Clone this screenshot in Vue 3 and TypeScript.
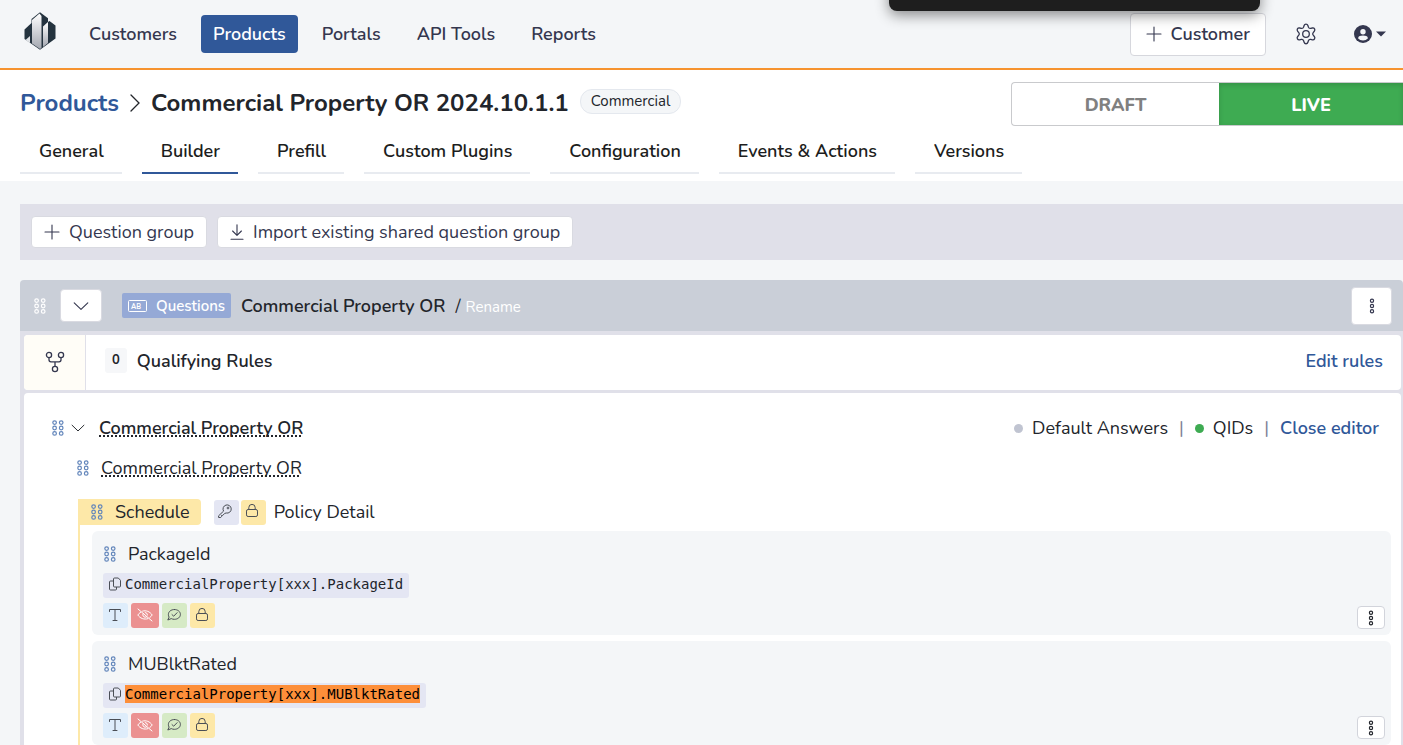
<script setup lang="ts">
import { ref } from 'vue'

interface Question {
  name: string
  path: string
  matched: boolean
}

const navItems: string[] = ['Customers', 'Products', 'Portals', 'API Tools', 'Reports']
const activeNav = ref('Products')

const tabs: string[] = ['General', 'Builder', 'Prefill', 'Custom Plugins', 'Configuration', 'Events & Actions', 'Versions']
const activeTab = ref('Builder')

const status = ref<'draft' | 'live'>('live')

const questions: Question[] = [
  { name: 'PackageId', path: 'CommercialProperty[xxx].PackageId', matched: false },
  { name: 'MUBlktRated', path: 'CommercialProperty[xxx].MUBlktRated', matched: true },
]
</script>

<template>
  <div class="page">
    <svg class="sprite" aria-hidden="true">
      <symbol id="i-drag" viewBox="0 0 12 16">
        <g fill="none" stroke="currentColor" stroke-width="1.2">
          <circle cx="2.6" cy="2.6" r="1.8" /><circle cx="9.2" cy="2.6" r="1.8" />
          <circle cx="2.6" cy="8" r="1.8" /><circle cx="9.2" cy="8" r="1.8" />
          <circle cx="2.6" cy="13.4" r="1.8" /><circle cx="9.2" cy="13.4" r="1.8" />
        </g>
      </symbol>
      <symbol id="i-more" viewBox="0 0 6 16">
        <g fill="none" stroke="currentColor" stroke-width="1.2">
          <circle cx="3" cy="2.8" r="1.6" /><circle cx="3" cy="8" r="1.6" /><circle cx="3" cy="13.2" r="1.6" />
        </g>
      </symbol>
      <symbol id="i-plus" viewBox="0 0 16 16">
        <path d="M8 1v14M1 8h14" fill="none" stroke="currentColor" stroke-width="1.1" stroke-linecap="round" />
      </symbol>
      <symbol id="i-chevron" viewBox="0 0 16 16">
        <path d="M1.2 4.8L8 11.4l6.8-6.6" fill="none" stroke="currentColor" stroke-width="1.1" stroke-linecap="round" stroke-linejoin="round" />
      </symbol>
      <symbol id="i-lock" viewBox="0 0 16 16">
        <g fill="none" stroke="currentColor" stroke-width="1" stroke-linejoin="round">
          <rect x="2.500" y="6.500" width="11" height="7" rx="1.600" />
          <path d="M4.800 6.500V4.600a3.200 3.200 0 0 1 6.400 0v1.900" />
        </g>
      </symbol>
    </svg>

    <div class="toast" role="status"></div>

    <header class="topbar">
      <a href="#" class="logo" aria-label="Home">
        <svg viewBox="0 0 32 38" width="32" height="38">
          <defs>
            <linearGradient id="tower" x1="0" y1="0" x2="0" y2="1">
              <stop offset="0" stop-color="#ffffff" />
              <stop offset="1" stop-color="#a3a7b0" />
            </linearGradient>
          </defs>
          <path d="M16 .3l8 6v3.700l1.500-1 6 4.500v13L16 37.700.5 27V17.500L7.500 11V7z" fill="#24333f" />
          <path d="M8 8L15.500 1.500 17.500 4V36L16 37l-8-5.500z" fill="url(#tower)" />
          <path d="M19 14.500L24 10v21l-5 4z" fill="url(#tower)" />
          <path d="M1.500 28l4.500-4v7z" fill="#dfe2e6" />
        </svg>
      </a>
      <nav class="nav">
        <a
          v-for="item in navItems"
          :key="item"
          href="#"
          class="nav-link"
          :class="{ active: item === activeNav }"
          @click.prevent="activeNav = item"
        >{{ item }}</a>
      </nav>
      <div class="account">
        <button type="button" class="customer-btn">
          <svg class="i16"><use href="#i-plus" /></svg>Customer
        </button>
        <button type="button" class="bare" aria-label="Settings">
          <svg viewBox="0 0 24 24" width="24" height="24" fill="none" stroke="currentColor" stroke-width="1.300" stroke-linejoin="round">
            <circle cx="12" cy="12" r="3.300" />
            <path d="M10.100 2.600C10.700.7 13.300.7 13.900 2.600l.5 1.600a2 2 0 0 0 2.300 1.300l1.700-.4c1.900-.4 3.200 1.800 1.900 3.300l-1.100 1.300a2 2 0 0 0 0 2.600l1.100 1.300c1.300 1.500 0 3.700-1.900 3.300l-1.700-.4a2 2 0 0 0-2.300 1.300l-.5 1.600c-.6 1.900-3.200 1.900-3.800 0l-.5-1.600a2 2 0 0 0-2.300-1.300l-1.700.4c-1.900.4-3.200-1.800-1.900-3.300l1.100-1.300a2 2 0 0 0 0-2.600L3.700 8.400C2.400 6.900 3.700 4.700 5.600 5.100l1.700.4a2 2 0 0 0 2.300-1.300z" transform="translate(0 .9)" />
          </svg>
        </button>
        <button type="button" class="bare user" aria-label="Account">
          <svg viewBox="0 0 18 18" width="18" height="18">
            <circle cx="9" cy="9" r="9" fill="currentColor" />
            <circle cx="9" cy="6.800" r="2.700" fill="#f4f6f8" />
            <path d="M4 13.200c.6-2 2.200-2.600 5-2.600s4.400.6 5 2.600a6.500 6.500 0 0 1-10 0z" fill="#f4f6f8" />
          </svg>
          <svg viewBox="0 0 10 6" width="10" height="6"><path d="M0 .5h10L5 5.500z" fill="currentColor" /></svg>
        </button>
      </div>
    </header>

    <section class="heading">
      <div class="title-row">
        <h1 class="title">
          <a href="#">Products</a>
          <svg viewBox="0 0 10 18" width="10" height="18"><path d="M1 1l8 8-8 8" fill="none" stroke="currentColor" stroke-width="1.300" stroke-linecap="round" /></svg>
          <span>Commercial Property OR 2024.10.1.1</span>
        </h1>
        <span class="pill">Commercial</span>
        <div class="status">
          <button type="button" :class="{ on: status === 'draft' }" @click="status = 'draft'">DRAFT</button>
          <button type="button" :class="{ on: status === 'live' }" @click="status = 'live'">LIVE</button>
        </div>
      </div>
      <nav class="tabs">
        <a
          v-for="tab in tabs"
          :key="tab"
          href="#"
          :class="{ active: tab === activeTab }"
          @click.prevent="activeTab = tab"
        >{{ tab }}</a>
      </nav>
    </section>

    <main class="content">
      <div class="toolbar">
        <button type="button" class="btn"><svg class="i16"><use href="#i-plus" /></svg>Question group</button>
        <button type="button" class="btn">
          <svg viewBox="0 0 14 16" width="14" height="16" fill="none" stroke="currentColor" stroke-width="1.100" stroke-linecap="round" stroke-linejoin="round"><path d="M7 .8v10.400M2.600 7L7 11.400 11.400 7M1 15.200h12" /></svg>
          Import existing shared question group
        </button>
      </div>

      <section class="group">
        <header class="group-head">
          <svg class="drag light"><use href="#i-drag" /></svg>
          <button type="button" class="btn toggle" aria-label="Collapse group"><svg class="i16"><use href="#i-chevron" /></svg></button>
          <span class="kind">
            <svg viewBox="0 0 19 12" width="19" height="12">
              <rect x=".5" y=".5" width="18" height="11" rx="1" fill="none" stroke="currentColor" />
              <text x="3" y="8.500" font-size="7" font-weight="700" fill="currentColor">AB</text>
            </svg>
            Questions
          </span>
          <h2>Commercial Property OR</h2>
          <span class="slash">/</span>
          <a href="#" class="rename">Rename</a>
          <button type="button" class="btn menu" aria-label="Group menu"><svg class="more"><use href="#i-more" /></svg></button>
        </header>

        <div class="group-body">
          <div class="rules">
            <div class="branch">
              <svg viewBox="0 0 20 22" width="20" height="22" fill="none" stroke="currentColor" stroke-width="1.300">
                <circle cx="4" cy="4" r="2.600" /><circle cx="16" cy="4" r="2.600" /><circle cx="10" cy="18" r="2.600" />
                <path d="M4 6.600v2.200a2 2 0 0 0 2 2h8a2 2 0 0 0 2-2V6.600M10 10.800v4.600" />
              </svg>
            </div>
            <span class="count">0</span>
            <h3>Qualifying Rules</h3>
            <a href="#" class="action">Edit rules</a>
          </div>

          <div class="editor">
            <div class="row">
              <svg class="drag"><use href="#i-drag" /></svg>
              <svg class="fold"><use href="#i-chevron" /></svg>
              <span class="dotted strong">Commercial Property OR</span>
              <div class="options">
                <span class="dot"></span><button type="button">Default Answers</button>
                <span class="bar">|</span>
                <span class="dot green"></span><button type="button">QIDs</button>
                <span class="bar">|</span>
                <a href="#" class="action">Close editor</a>
              </div>
            </div>
            <div class="row second">
              <svg class="drag"><use href="#i-drag" /></svg>
              <span class="dotted">Commercial Property OR</span>
            </div>

            <div class="schedule">
              <div class="schedule-head">
                <span class="schedule-tag"><svg class="drag"><use href="#i-drag" /></svg>Schedule</span>
                <span class="badge violet">
                  <svg viewBox="0 0 16 16" width="16" height="16" fill="none" stroke="currentColor" stroke-linejoin="round">
                    <path d="M6.600 8.100A4.100 4.100 0 1 1 9.200 10L7.700 10.400 5.800 12.400H4.500v1.300L3.700 14.500H1.600V12.800z" />
                    <circle cx="11" cy="5" r=".9" />
                  </svg>
                </span>
                <span class="badge yellow"><svg class="i16"><use href="#i-lock" /></svg></span>
                <span class="detail">Policy Detail</span>
              </div>

              <article v-for="q in questions" :key="q.name" class="question">
                <div class="question-main">
                  <div class="question-name"><svg class="drag"><use href="#i-drag" /></svg>{{ q.name }}</div>
                  <button type="button" class="path">
                    <svg viewBox="0 0 12 14" width="12" height="14" fill="none" stroke="currentColor" stroke-linejoin="round">
                      <path d="M5.500 1h3.800L11.500 3.300V9a1 1 0 0 1-1 1h-5a1 1 0 0 1-1-1V2a1 1 0 0 1 1-1z" />
                      <path d="M4.500 4h-3a1 1 0 0 0-1 1v7a1 1 0 0 0 1 1h5a1 1 0 0 0 1-1v-2" />
                    </svg>
                    <mark v-if="q.matched">{{ q.path }}</mark>
                    <span v-else>{{ q.path }}</span>
                  </button>
                  <div class="badges">
                    <span class="badge blue">
                      <svg viewBox="0 0 16 16" width="16" height="16" fill="none" stroke="currentColor" stroke-linecap="round"><path d="M2.500 4.500v-2h11v2M8 2.500v11M6 13.500h4" /></svg>
                    </span>
                    <span class="badge red">
                      <svg viewBox="0 0 16 14" width="16" height="14" fill="none" stroke="currentColor" stroke-linecap="round">
                        <path d="M3.800 4.100C2.600 4.900 1.500 6 .8 7c2.200 3.300 6.300 4.900 10 3.700M5.600 3.100C9 2 13 3.600 15.200 7c-.6.9-1.400 1.800-2.400 2.500" />
                        <path d="M6.200 5.400a2.500 2.500 0 0 0 3.400 3.500M8.200 4.500A2.500 2.500 0 0 1 10.500 7M1 1l14 12" />
                      </svg>
                    </span>
                    <span class="badge green">
                      <svg viewBox="0 0 16 16" width="16" height="16" fill="none" stroke="currentColor" stroke-linecap="round" stroke-linejoin="round">
                        <path d="M8.400 2.500c3.400 0 6 2.100 6 4.900s-2.600 4.900-6 4.900c-1.200 0-2.200-.2-3.100-.7L1.800 13l1.300-2.900A4.500 4.500 0 0 1 2.400 7.400c0-2.800 2.600-4.900 6-4.900z" /><path d="M6 7.600l1.700 1.600 3.400-3.500" />
                      </svg>
                    </span>
                    <span class="badge yellow"><svg class="i16"><use href="#i-lock" /></svg></span>
                  </div>
                </div>
                <button type="button" class="more-btn" aria-label="Question menu"><svg class="more"><use href="#i-more" /></svg></button>
              </article>
            </div>
          </div>
        </div>
      </section>
    </main>
  </div>
</template>

<style>
body {
  margin: 0;
}
</style>

<style scoped>
* {
  box-sizing: border-box;
}
.page {
  position: relative;
  height: 100vh;
  overflow: hidden;
  background: #f4f6f8;
  color: #22252b;
  font: 400 18px/24px Nunito, "Open Sans", "Noto Sans", sans-serif;
}
.sprite {
  position: absolute;
  width: 0;
  height: 0;
}
svg {
  display: block;
  flex: none;
}
button {
  font: inherit;
  color: inherit;
  margin: 0;
  padding: 0;
  border: 0;
  background: none;
  cursor: pointer;
}
a {
  text-decoration: none;
}
h1, h2, h3 {
  margin: 0;
  font-size: 18px;
  font-weight: 600;
}
.i16 {
  width: 16px;
  height: 16px;
}
.drag {
  width: 12px;
  height: 16px;
  color: #6084ba;
}
.drag.light {
  color: #fff;
}
.more {
  width: 6px;
  height: 16px;
}
.toast {
  position: absolute;
  z-index: 2;
  top: -30px;
  right: 143px;
  width: 371px;
  height: 41px;
  border-radius: 8px;
  background: #1e1e1e;
  box-shadow: 0 4px 14px rgba(0, 0, 0, 0.45);
}

.topbar {
  display: flex;
  align-items: center;
  height: 70px;
  padding: 0 17px 0 24px;
  border-bottom: 2px solid #f6932f;
  color: #34374f;
}
.logo {
  margin: -6px 21px 0 0;
}
.nav {
  display: flex;
  gap: 12px;
}
.nav-link {
  padding: 7px 12px;
  border-radius: 4px;
  color: inherit;
  font-weight: 600;
}
.nav-link.active {
  background: #305899;
  color: #fff;
}
.account {
  display: flex;
  align-items: center;
  gap: 28px;
  margin-left: auto;
}
.customer-btn {
  display: flex;
  align-items: center;
  gap: 9px;
  height: 43px;
  padding: 0 15px;
  border: 1px solid #d6d7dd;
  border-radius: 4px;
  background: #fff;
  font-weight: 600;
}
.user {
  display: flex;
  align-items: center;
  gap: 4px;
  margin-left: 8px;
}

.heading {
  padding: 12px 0 7px 20px;
  background: #fff;
}
.title-row {
  display: flex;
  align-items: flex-start;
}
.title {
  display: flex;
  align-items: center;
  gap: 11px;
  padding-top: 5px;
  font-size: 24px;
  font-weight: 700;
  line-height: 32px;
}
.title a, .action {
  color: #305899;
}
.pill {
  margin: 7px 0 0 11px;
  padding: 0 10px;
  border: 1px solid #e4e8ee;
  border-radius: 12px;
  background: #f4f6f8;
  font-size: 15px;
  line-height: 23px;
}
.status {
  display: flex;
  width: 392px;
  margin-left: auto;
  border: 1px solid #c9cacd;
  border-right: 0;
  border-radius: 4px 0 0 4px;
  overflow: hidden;
}
.status button {
  flex: 0 0 207px;
  height: 42px;
  padding-top: 2px;
  color: #808080;
  font-weight: 800;
}
.status button:last-child {
  flex: 1;
}
.status button.on {
  background: #3eab52;
  color: #fff;
  box-shadow: inset 0 2px 5px rgba(0, 0, 0, 0.15);
}
.tabs {
  display: flex;
  gap: 20px;
  margin-top: 13px;
}
.tabs a {
  padding: 0 18px 9px 19px;
  border-bottom: 2px solid #e8ebf0;
  color: #1c1d20;
  font-weight: 600;
}
.tabs a.active {
  border-color: #305899;
}

.content {
  padding: 23px 0 0 20px;
}
.toolbar {
  display: flex;
  gap: 10px;
  padding: 12px 11px;
  background: #e0e0e9;
}
.btn {
  display: flex;
  align-items: center;
  justify-content: center;
  gap: 9px;
  height: 32px;
  padding: 0 12px;
  border: 1px solid #d9dae1;
  border-radius: 4px;
  background: #fff;
  color: #34374f;
}
.group {
  margin-top: 20px;
}
.group-head {
  display: flex;
  align-items: center;
  height: 51px;
  padding: 0 11px 0 14px;
  border-radius: 4px 4px 0 0;
  background: #cacfd8;
}
.btn.toggle {
  width: 42px;
  height: 33px;
  margin: 0 20px 0 14px;
}
.btn.menu {
  width: 41px;
  height: 38px;
  margin-left: auto;
}
.kind {
  display: flex;
  align-items: center;
  gap: 9px;
  margin-right: 10px;
  padding: 1px 6px 0;
  border-radius: 2px;
  background: #95a9d6;
  color: #fff;
  font-size: 15px;
  font-weight: 600;
  line-height: 24px;
}
.slash {
  margin: 0 5px 0 10px;
}
.rename {
  padding-top: 2px;
  color: #fff;
  font-size: 15px;
}
.group-body {
  display: flex;
  flex-direction: column;
  gap: 3px;
  padding: 4px 2px 0 4px;
  background: #e0e0e9;
}
.rules {
  display: flex;
  align-items: center;
  height: 55px;
  padding-right: 18px;
  border-radius: 4px;
  background: #fff;
  overflow: hidden;
}
.rules h3, .rules .action {
  padding-bottom: 3px;
}
.branch {
  display: flex;
  align-items: center;
  justify-content: center;
  align-self: stretch;
  width: 62px;
  padding-bottom: 2px;
  border-right: 1px solid #e0e0e9;
  background: #fffdf7;
  color: #34374f;
}
.count {
  margin: 0 10px 4px 19px;
  padding: 0 7px;
  border-radius: 3px;
  background: #f6f7f9;
  font-size: 13px;
  font-weight: 700;
  line-height: 25px;
}
.action {
  margin-left: auto;
  font-weight: 600;
}

.editor {
  padding: 23px 10px 20px 28px;
  border-radius: 4px 4px 0 0;
  background: #fff;
}
.row {
  display: flex;
  align-items: center;
}
.fold {
  width: 14px;
  height: 14px;
  margin: 0 14px 0 7px;
}
.dotted {
  text-decoration: underline dotted 2px;
  text-underline-offset: 1px;
  text-decoration-skip-ink: none;
}
.strong {
  font-weight: 600;
}
.options {
  display: flex;
  align-items: center;
  margin: 0 12px 0 auto;
}
.dot {
  width: 9px;
  height: 9px;
  margin-right: 9px;
  border-radius: 50%;
  background: #c0c4d1;
}
.dot.green {
  background: #3eab52;
}
.bar {
  margin: 0 11px;
  color: #7d8196;
}
.second {
  gap: 12px;
  margin-top: 16px;
  padding-left: 25px;
}
.schedule {
  margin: 19px 0 0 26px;
  border-left: 2px solid #fde8a8;
}
.schedule-head {
  display: flex;
  align-items: center;
  height: 26px;
}
.schedule-tag {
  display: flex;
  align-items: center;
  gap: 12px;
  margin-right: 13px;
  padding: 0 11px;
  border-radius: 0 4px 4px 0;
  background: #fde8a8;
  line-height: 26px;
}
.badge {
  display: flex;
  align-items: center;
  justify-content: center;
  width: 25px;
  height: 25px;
  padding: 0 2px 2px 0;
  border-radius: 3px;
  color: #4a4e56;
}
.badge.violet {
  margin-right: 2px;
  background: #e4e6f3;
}
.badge.yellow {
  background: #fde8a8;
}
.badge.blue {
  background: #deedfb;
}
.badge.red {
  width: 28px;
  padding-right: 0;
  background: #eb9191;
  color: #fff;
}
.badge.green {
  background: #d6eac5;
}
.detail {
  margin-left: 8px;
}
.question {
  display: flex;
  align-items: flex-end;
  justify-content: space-between;
  margin: 6px 0 0 12px;
  padding: 11px 6px 6px 11px;
  border-radius: 6px;
  background: #f4f6f8;
}
.question-main {
  padding-bottom: 1px;
}
.question-name {
  display: flex;
  align-items: center;
  gap: 12px;
  padding-left: 1px;
}
.path {
  display: flex;
  align-items: center;
  gap: 4px;
  height: 25px;
  margin: 7px 0 5px;
  padding: 0 6px 4px;
  border-radius: 3px;
  background: #e4e6f3;
  font: 14px/18px "DejaVu Sans Mono", monospace;
}
.path svg {
  color: #4a4e56;
}
.path mark {
  background: #fd8f3a;
  color: #000;
}
.badges {
  display: flex;
  gap: 3px;
}
.more-btn {
  display: flex;
  align-items: center;
  justify-content: center;
  width: 28px;
  height: 23px;
  border: 1px solid #d2d4db;
  border-radius: 4px;
  background: #fff;
}
</style>
